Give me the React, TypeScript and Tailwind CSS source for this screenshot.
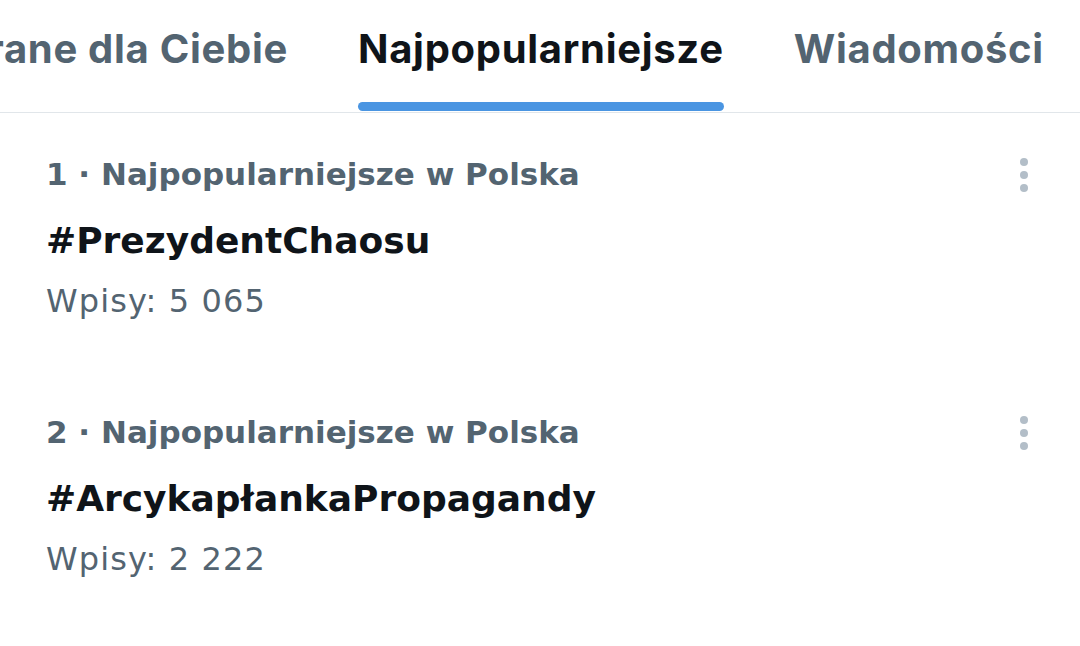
import React from 'react';

const tabs = [
  { name: 'Wybrane dla Ciebie', active: false },
  { name: 'Najpopularniejsze', active: true },
  { name: 'Wiadomości', active: false },
];

const trends = [
  { rank: 1, place: 'Najpopularniejsze w Polska', tag: '#PrezydentChaosu', posts: '5 065' },
  { rank: 2, place: 'Najpopularniejsze w Polska', tag: '#ArcykapłankaPropagandy', posts: '2 222' },
];

// padding per tab; the first one is scrolled partly out of view
const tabBox = [
  'flex w-[322px] shrink-0 justify-end overflow-hidden pl-[36px] pr-[34px]',
  'flex shrink-0 px-[36px]',
  'flex shrink-0 pl-[34px] pr-[36px]',
];

function MoreDots() {
  return (
    <button className="flex flex-col items-center gap-[5px]" aria-label="Więcej">
      <span className="block h-[8px] w-[8px] rounded-full bg-[#b3bec8]" />
      <span className="block h-[8px] w-[8px] rounded-full bg-[#b3bec8]" />
      <span className="block h-[8px] w-[8px] rounded-full bg-[#b3bec8]" />
    </button>
  );
}

export default function App() {
  return (
    <div className="h-[646px] w-[1080px] overflow-hidden bg-white">
      <div
        className="flex h-[113px] border-b border-[#e1e6ea]"
        style={{ fontFamily: 'Inter, Roboto, sans-serif' }}
      >
        {tabs.map((tab, i) => (
          <div key={tab.name} className={tabBox[i]}>
            <div className="flex flex-col items-stretch pt-[28px]">
              <span
                className={
                  tab.active
                    ? 'whitespace-nowrap text-[40px] leading-[42px] font-bold tracking-[0.7px] text-[#0f1419]'
                    : 'whitespace-nowrap text-[40px] leading-[42px] font-bold tracking-[0.7px] text-[#536471]'
                }
              >
                {tab.name}
              </span>
              <div
                className={
                  tab.active
                    ? 'mt-[32px] h-[9px] rounded-full bg-[#4a95e2]'
                    : 'mt-[32px] h-[9px]'
                }
              />
            </div>
          </div>
        ))}
      </div>

      <div style={{ fontFamily: '"DejaVu Sans", Inter, sans-serif' }}>
        {trends.map((t) => (
          <div key={t.rank} className="flex h-[258px] pl-[46px] pr-[52px] pt-[45px]">
            <div className="flex flex-1 flex-col">
              <span className="text-[31px] leading-[32px] font-bold text-[#536471]">
                {t.rank} · {t.place}
              </span>
              <span className="mt-[33px] text-[36px] leading-[36px] font-bold text-[#0f1419]">
                {t.tag}
              </span>
              <span className="mt-[26px] text-[32px] leading-[32px] tracking-[1.1px] text-[#536471]">
                Wpisy: {t.posts}
              </span>
            </div>
            <MoreDots />
          </div>
        ))}
      </div>
    </div>
  );
}
